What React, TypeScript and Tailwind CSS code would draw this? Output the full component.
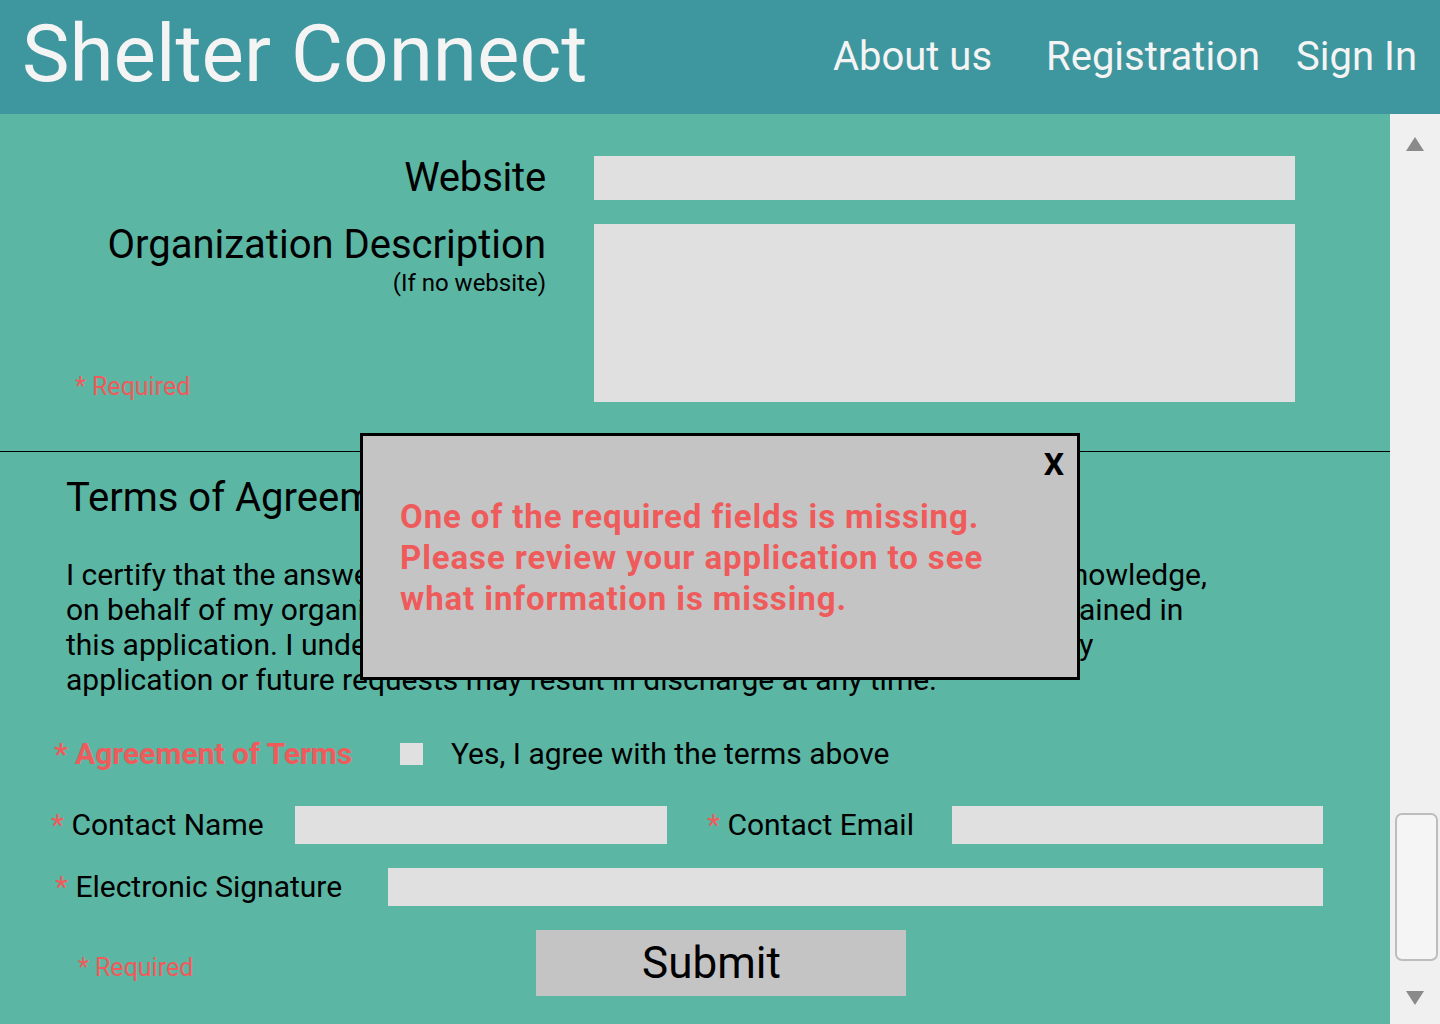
const terms = [
  'I certify that the answers provided are true and complete to the best of my knowledge,',
  'on behalf of my organization. I authorize investigation of all statements contained in',
  'this application. I understand that false or misleading information given in my',
  'application or future requests may result in discharge at any time.',
]

function Star() {
  return <span className="text-[#ef5b5b]">* </span>
}

function ScrollBar() {
  return (
    <div className="w-[50px] shrink-0 bg-[#f0f0f0] flex flex-col items-center pt-[22px] pb-[18px]">
      <svg width="20" height="16" viewBox="0 0 20 16" aria-hidden="true">
        <path d="M10 1 L19 15 L1 15 Z" fill="#8a8a8a" />
      </svg>
      <div className="flex-1" />
      <div className="w-[43px] h-[148px] ml-[3px] rounded-[7px] border-2 border-[#bdbdbd] bg-[#f5f5f5]" />
      <svg width="20" height="16" viewBox="0 0 20 16" className="mt-[29px]" aria-hidden="true">
        <path d="M1 1 L19 1 L10 15 Z" fill="#8a8a8a" />
      </svg>
    </div>
  )
}

export default function App() {
  return (
    <div className="h-[1024px] w-[1440px] overflow-hidden flex flex-col font-['Roboto',sans-serif] text-black">
      {/* Header */}
      <header className="h-[114px] shrink-0 bg-[#3e969e] flex items-center text-[#f4f4f4]">
        <h1 className="ml-[22px] text-[80px] leading-none font-normal -mt-[6px]">Shelter Connect</h1>
        <nav className="ml-auto mr-[23px] flex items-center text-[40px] leading-none">
          <a href="#">About us</a>
          <a href="#" className="ml-[54px]">Registration</a>
          <a href="#" className="ml-[36px]">Sign In</a>
        </nav>
      </header>

      <div className="flex flex-1 min-h-0">
        <main className="relative flex-1 bg-[#5cb6a4]">
          {/* Organization info */}
          <section className="pt-[40px] pb-[49px] flex flex-col gap-[22px]">
            <div className="flex items-center">
              <label className="w-[546px] text-right text-[40px] leading-[48px] tracking-[-0.2px]">Website</label>
              <input className="ml-[48px] w-[701px] h-[44px] bg-[#e0e0e0] outline-none" />
            </div>
            <div className="flex items-stretch">
              <div className="w-[546px] flex flex-col items-end">
                <label className="text-[40px] leading-[42px]">Organization Description</label>
                <span className="mt-[3px] text-[24px] leading-[28px]">(If no website)</span>
                <span className="mt-auto mb-[1px] self-start ml-[75px] text-[25px] leading-[28px] text-[#ef5b5b]">* Required</span>
              </div>
              <textarea className="ml-[48px] w-[701px] h-[178px] bg-[#e0e0e0] resize-none outline-none" />
            </div>
          </section>

          <hr className="border-0 border-t border-black" />

          {/* Terms */}
          <section className="pt-[22px]">
            <h2 className="ml-[66px] text-[40px] leading-[48px] font-normal">Terms of Agreement</h2>
            <p className="mt-[35px] ml-[66px] text-[30px] leading-[35px]">
              {terms.map((line) => (
                <span key={line} className="block whitespace-nowrap">{line}</span>
              ))}
            </p>

            <div className="mt-[39px] h-[36px] flex items-center">
              <span className="ml-[54px] w-[346px] text-[30px] leading-[36px] font-bold text-[#ef5b5b]">* Agreement of Terms</span>
              <span className="w-[23px] h-[22px] bg-[#e0e0e0]" />
              <span className="ml-[28px] text-[30px] leading-[36px]">Yes, I agree with the terms above</span>
            </div>

            <div className="mt-[34px] flex items-center">
              <label className="ml-[51px] w-[244px] text-[30px] leading-[36px]">
                <Star />Contact Name
              </label>
              <input className="w-[372px] h-[38px] bg-[#e0e0e0] outline-none" />
              <label className="ml-[40px] w-[245px] text-[30px] leading-[36px]">
                <Star />Contact Email
              </label>
              <input className="w-[371px] h-[38px] bg-[#e0e0e0] outline-none" />
            </div>

            <div className="mt-[24px] flex items-center">
              <label className="ml-[55px] w-[333px] text-[30px] leading-[36px]">
                <Star />Electronic Signature
              </label>
              <input className="w-[935px] h-[38px] bg-[#e0e0e0] outline-none" />
            </div>

            <div className="mt-[24px] flex items-center">
              <div className="w-[536px] pl-[78px]">
                <span className="block mt-[10px] text-[25px] leading-[28px] text-[#ef5b5b]">* Required</span>
              </div>
              <button className="w-[370px] h-[66px] pr-[19px] bg-[#c4c4c4] text-[44px] leading-none">Submit</button>
            </div>
          </section>

          {/* Error dialog */}
          <div className="absolute left-[360px] top-[319px] w-[720px] h-[247px] border-[3px] border-black bg-[#c4c4c4]">
            <button className="absolute top-[12px] right-[13px] text-[32px] leading-[32px] font-bold">X</button>
            <p className="pt-[60px] pl-[37px] text-[33px] leading-[41px] font-bold tracking-[0.9px] text-[#ef5b5b]">
              One of the required fields is missing.
              <br />
              Please review your application to see
              <br />
              what information is missing.
            </p>
          </div>
        </main>
        <ScrollBar />
      </div>
    </div>
  )
}
